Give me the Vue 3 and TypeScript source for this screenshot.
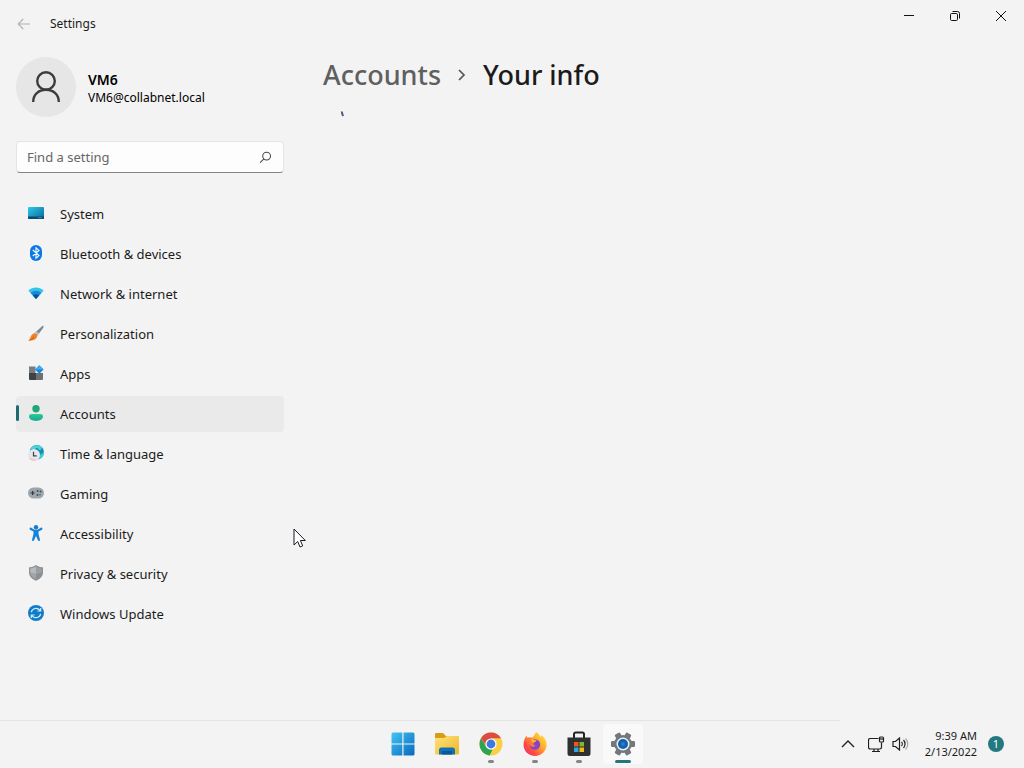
<script setup lang="ts">
import { ref } from 'vue'

interface NavItem {
  id: string
  label: string
}

const items: NavItem[] = [
  { id: 'system', label: 'System' },
  { id: 'bluetooth', label: 'Bluetooth & devices' },
  { id: 'network', label: 'Network & internet' },
  { id: 'personalization', label: 'Personalization' },
  { id: 'apps', label: 'Apps' },
  { id: 'accounts', label: 'Accounts' },
  { id: 'time', label: 'Time & language' },
  { id: 'gaming', label: 'Gaming' },
  { id: 'accessibility', label: 'Accessibility' },
  { id: 'privacy', label: 'Privacy & security' },
  { id: 'update', label: 'Windows Update' },
]

const current = ref('accounts')
const query = ref('')
</script>

<template>
  <div class="desktop">
    <header class="titlebar">
      <button class="back" aria-label="Back" disabled>
        <svg width="14" height="12" viewBox="0 0 14 12" fill="none" stroke="#b2b2b2" stroke-width="1.1">
          <path d="M13 6H1.200M6.200 1 1.200 6l5 5" />
        </svg>
      </button>
      <span class="app-name">Settings</span>
      <div class="window-buttons">
        <button aria-label="Minimize">
          <svg width="12" height="12" viewBox="0 0 12 12" stroke="#111" fill="none"><path d="M1 5.500h10" /></svg>
        </button>
        <button aria-label="Restore">
          <svg width="12" height="12" viewBox="0 0 12 12" stroke="#111" fill="none">
            <rect x="1.500" y="3.500" width="7" height="7" rx="1.200" />
            <path d="M3.500 1.500h5a2 2 0 0 1 2 2v5" />
          </svg>
        </button>
        <button aria-label="Close">
          <svg width="12" height="12" viewBox="0 0 12 12" stroke="#111" fill="none"><path d="m1 1 10 10M11 1 1 11" /></svg>
        </button>
      </div>
    </header>

    <div class="content">
      <aside class="sidebar">
        <button class="profile">
          <span class="avatar">
            <svg width="30" height="34" viewBox="0 0 30 34" fill="none" stroke="#3c3c3c" stroke-width="2.400">
              <circle cx="15" cy="11" r="8.800" />
              <path d="M2.200 32c0-7.600 5.300-12.200 12.800-12.200S27.800 24.400 27.800 32" />
            </svg>
          </span>
          <span class="identity">
            <strong>VM6</strong>
            <span>VM6@collabnet.local</span>
          </span>
        </button>

        <div class="search">
          <input v-model="query" type="text" placeholder="Find a setting" aria-label="Find a setting" />
          <svg width="13" height="13" viewBox="0 0 14 14" fill="none" stroke="#444" stroke-width="1.100">
            <circle cx="8.200" cy="5.500" r="4.200" />
            <path d="M5.200 8.500 1.200 12.500" />
          </svg>
        </div>

        <nav class="menu" aria-label="Settings">
          <a
            v-for="item in items"
            :key="item.id"
            :href="'#' + item.id"
            :class="{ active: current === item.id }"
            :aria-current="current === item.id ? 'page' : undefined"
            @click.prevent="current = item.id"
          >
            <svg class="icon" width="16" height="16" viewBox="0 0 16 16">
              <g v-if="item.id === 'system'">
                <defs>
                  <linearGradient id="sys" x1="0" y1="0" x2="1" y2="1"><stop stop-color="#2fc9e8" /><stop offset="1" stop-color="#09669a" /></linearGradient>
                </defs>
                <rect y="2" width="16" height="12" rx="1" fill="url(#sys)" />
                <path d="M0 11.500h16V13a1 1 0 0 1-1 1H1a1 1 0 0 1-1-1z" fill="#084a72" />
                <path d="M10.500 12.700h1M12.500 12.700h1" stroke="#a6dcf0" stroke-width="0.800" />
              </g>
              <g v-else-if="item.id === 'bluetooth'">
                <rect x="2" width="12" height="16" rx="6" fill="#0a78e6" />
                <path d="m4.800 5 6.200 5.500L8 13.300V2.700l3 2.800L4.800 11" fill="none" stroke="#fff" stroke-width="1.100" />
              </g>
              <g v-else-if="item.id === 'network'">
                <path d="M.4 5.800C4.800 1.500 11.200 1.500 15.600 5.800L8 14z" fill="#35c3ed" />
                <path d="M2.700 8C5.800 5.100 10.200 5.100 13.300 8L8 14z" fill="#168bd4" />
                <path d="M4.800 10.500c1.900-1.800 4.500-1.800 6.400 0L8 14z" fill="#09529b" />
              </g>
              <g v-else-if="item.id === 'personalization'">
                <path d="M14.800.4c1 .5.900 1.500.3 2.500L9.500 10.500 6.600 8z" fill="#7c8b96" />
                <path d="m8.300 6.200 2.700 2.300-1.800 2.400-3-2.500z" fill="#b9c5cb" />
                <path d="M6.400 8.200c2 .1 3.200 1.300 2.900 2.800-.6 3.500-4.800 5.300-9 4.500 2.200-1 2.100-6.800 6.100-7.300z" fill="#ee8527" />
                <path d="M.3 15.500c3-.6 4.200-2.500 6.200-4.700-.6 2.600-2.800 4.900-6.200 4.700z" fill="#bd5213" />
              </g>
              <g v-else-if="item.id === 'apps'">
                <path d="M1 1.500h6.500V8H1z" fill="#777d80" /><path d="M1 8h7v7H2a1 1 0 0 1-1-1z" fill="#3d4245" />
                <path d="M8 8h7v6a1 1 0 0 1-1 1H8z" fill="#6b7073" /><path d="m11.300.2 4.300 4.300-4.300 4.300L7 4.500z" fill="#1584df" />
                <path d="m11.300.2 4.300 4.300H7z" fill="#3eabf2" />
              </g>
              <g v-else-if="item.id === 'accounts'">
                <defs><linearGradient id="acc" x2="0" y2="1"><stop stop-color="#30c997" /><stop offset="1" stop-color="#13a894" /></linearGradient></defs>
                <circle cx="8" cy="3.700" r="3.700" fill="#20a779" />
                <path d="M3.700 9h8.600c1.500 0 2.700.9 2.700 2.300 0 2.800-3.200 4.700-7 4.700s-7-1.900-7-4.700C1 9.900 2.200 9 3.700 9z" fill="url(#acc)" />
              </g>
              <g v-else-if="item.id === 'time'">
                <circle cx="8.800" cy="7.200" r="7.200" fill="#158fb8" />
                <path d="M2.500 3.700C5-.4 11-1 14.300 2.500L12 5.500 9 2.800 5 5z" fill="#4ed3d8" />
                <path d="M10.500 11 16 7c.2 4-2.500 7.200-6 7.500z" fill="#43c9d2" />
                <circle cx="6" cy="9.900" r="6" fill="#e7e6e9" />
                <path d="M.8 12.500 9 15c-3 1.600-6.700.6-8.200-2.500z" fill="#f0c5c6" />
                <path d="M5.500 6.800v4h3.200" fill="none" stroke="#39454e" stroke-width="1.200" />
              </g>
              <g v-else-if="item.id === 'gaming'">
                <rect y="2.500" width="16" height="11" rx="5.500" fill="#9da6ac" />
                <path d="M2.500 8h4.200M4.600 5.900v4.200" stroke="#30383d" stroke-width="1.200" />
                <circle cx="9.600" cy="6" r="1" fill="#444e55" /><circle cx="12.600" cy="6.500" r="1" fill="#444e55" /><circle cx="9.500" cy="10" r="1" fill="#444e55" /><circle cx="12" cy="9.800" r="1" fill="#687e8d" />
              </g>
              <g v-else-if="item.id === 'accessibility'">
                <circle cx="8" cy="2.300" r="2.200" fill="#147bd1" />
                <path d="M2 2.800c-.8.700-.5 1.500.4 2.100L5.500 6.500V9L4 14.700c-.2 1.200 1.600 1.700 2.100.5L8 11l1.900 4.200c.5 1.200 2.300.7 2.100-.5L10.500 9V6.500l3.100-1.600c.9-.6 1.200-1.400.4-2.100-.7-.7-1.400-.2-2 .4-1 .9-2.200 1.500-4 1.500S5 4.100 4 3.200c-.6-.6-1.300-1.100-2-.4z" fill="#1783d8" />
              </g>
              <g v-else-if="item.id === 'privacy'">
                <path d="M8 0c2.200 1.600 4.300 2.300 7 2.300v4.900c0 4-2.700 6.600-7 8.600-4.300-2-7-4.600-7-8.600V2.300C3.700 2.300 5.800 1.600 8 0z" fill="#8b9094" />
                <path d="M8 1.500c1.800 1.200 3.700 1.800 5.800 1.900v4L8 9z" fill="#999fa3" /><path d="M8 1.500C6.200 2.700 4.300 3.300 2.200 3.400v4L8 9z" fill="#b6babd" />
                <path d="M2.200 7.200 8 9v5.300c-3.200-1.600-5.600-3.700-5.800-7.100z" fill="#a0a5a8" />
              </g>
              <g v-else>
                <circle cx="8" cy="8" r="8" fill="#127cc9" />
                <path d="M3.300 7.200C4.300 3.100 9.300 2.200 12 5.200M12.700 3v3H9.500M12.700 8.800c-1 4.100-6 5-8.700 2M3.300 13v-3h3.200" fill="none" stroke="#d5effb" stroke-width="1.200" />
              </g>
            </svg>
            <span>{{ item.label }}</span>
          </a>
        </nav>
      </aside>

      <main class="page">
        <h1>
          <a href="#accounts">Accounts</a>
          <svg width="10" height="14" viewBox="0 0 10 14" fill="none" stroke="#555" stroke-width="1.700"><path d="m2 2 5 5-5 5" /></svg>
          <span>Your info</span>
        </h1>
        <svg class="spinner" width="8" height="8" viewBox="0 0 8 8" role="img" aria-label="Loading">
          <path d="M2.800 1.500Q3 4 4.200 6" fill="none" stroke="#535678" stroke-width="2" />
        </svg>
      </main>
    </div>

    <svg class="pointer" width="14" height="21" viewBox="0 0 14 21" aria-hidden="true">
      <path d="M1 1v16l3.700-3.500L7 19l2.700-1.100-2.300-5.400h4.900z" fill="#fff" stroke="#171b24" />
    </svg>

    <footer class="taskbar">
      <div class="dock">
        <button aria-label="Start">
          <svg width="24" height="24" viewBox="0 0 24 24">
            <defs><linearGradient id="win" x2="1" y2="1"><stop stop-color="#43c5f4" /><stop offset="1" stop-color="#0768bd" /></linearGradient></defs>
            <path d="M2 .5h9.300v11H.5V2A1.500 1.500 0 0 1 2 .5zM12.500.5H22A1.500 1.500 0 0 1 23.500 2v9.500h-11zM.5 12.500h10.800v11H2A1.500 1.500 0 0 1 .5 22zM12.500 12.500h11V22a1.500 1.500 0 0 1-1.500 1.500h-9.500z" fill="url(#win)" />
          </svg>
        </button>
        <button aria-label="File Explorer">
          <svg width="26" height="24" viewBox="0 0 26 24">
            <defs><linearGradient id="folder" x2="1" y2="1"><stop stop-color="#ffe27a" /><stop offset="1" stop-color="#edb62a" /></linearGradient></defs>
            <path d="M2 1h7l3 3h9v5H1V2a1 1 0 0 1 1-1z" fill="#d99c18" />
            <path d="M1 6h9l3-2h11a1 1 0 0 1 1 1v16a1.500 1.500 0 0 1-1.500 1.500h-21A1.500 1.500 0 0 1 1 21z" fill="url(#folder)" />
            <path d="M5 22.500V18a2.500 2.500 0 0 1 2.500-2.500h11A2.500 2.500 0 0 1 21 18v4.500z" fill="#1270b8" /><path d="M8 19h10v3.500H8z" fill="#0b5798" />
          </svg>
        </button>
        <button class="open" aria-label="Chrome">
          <svg width="24" height="24" viewBox="0 0 24 24">
            <circle cx="12" cy="12" r="11.500" fill="#f8cf45" />
            <path d="M2 6.300A11.500 11.500 0 0 1 22 6.300H12L8 15z" fill="#db4d40" />
            <path d="M2 6.300 7.300 15c1.200 2 3.600 3 6.400 2.200l-3.100 6.200A11.500 11.500 0 0 1 2 6.300z" fill="#2da454" />
            <circle cx="12" cy="12" r="5.600" fill="#fff" /><circle cx="12" cy="12" r="4.400" fill="#3e78e0" />
          </svg>
        </button>
        <button class="open" aria-label="Firefox">
          <svg width="24" height="24" viewBox="0 0 24 24">
            <defs>
              <linearGradient id="fox" x1="1" y1="0" x2="0" y2="1"><stop stop-color="#fff04a" /><stop offset=".4" stop-color="#ffad2b" /><stop offset=".7" stop-color="#ff4c42" /><stop offset="1" stop-color="#e82781" /></linearGradient>
            </defs>
            <path d="M3.500 3.500c.2 1.200.6 1.800 1.200 2.300L9 5.500c1.500-.1 2.500-2.700 4-5.500 2.300 1.100 3.800 3.100 4.300 4.700.8-.1 1.300-.8 1.300-1.700 3.300 2.700 5.100 6.100 5 9.800-.1 6.300-5.100 11.100-11.600 11.100S.5 18.900.5 12.700c0-3.700 1.300-6.600 3-9.200z" fill="url(#fox)" />
            <circle cx="12" cy="12.500" r="5.200" fill="#8446c5" />
            <path d="M3.700 6.300c2.600-1.500 5.300-.3 6.500 1.300l3.500 1c-.6 1.500-2.400 1.300-3.100 2.700-.6 1.300.7 2.500 2.300 2.200-1.700 2-4.800 1.800-5.900-.4C5.800 10.700 6.100 8 8 7z" fill="#ff783b" />
            <path d="M8 7.200c1-.3 1.800.1 2.300.5l3 .8c-.5 1.100-2 1.300-2.800 2.200-1.200-.7-2.300-1.800-2.500-3.500z" fill="#ffb62e" />
          </svg>
        </button>
        <button class="open" aria-label="Microsoft Store">
          <svg width="24" height="26" viewBox="0 0 24 26">
            <path d="M7 8V3.200A1.700 1.700 0 0 1 8.700 1.500h6.600A1.700 1.700 0 0 1 17 3.200V8" fill="none" stroke="#242424" stroke-width="2" />
            <path d="M.5 6.500h23v16a2.500 2.500 0 0 1-2.500 2.500H3A2.500 2.500 0 0 1 .5 22.500z" fill="#2f3030" />
            <path d="M7 11h4.500v4.500H7z" fill="#f1512b" /><path d="M12.500 11H17v4.500h-4.500z" fill="#7db928" /><path d="M7 16.500h4.500V21H7z" fill="#27a9e6" /><path d="M12.500 16.500H17V21h-4.500z" fill="#f8b719" />
          </svg>
        </button>
        <button class="focused" aria-label="Settings">
          <svg width="26" height="26" viewBox="0 0 26 26">
            <g fill="#73787c">
              <circle cx="13" cy="13" r="9" />
              <rect v-for="n in 6" :key="n" x="10" y="1" width="6" height="6" rx="1.200" :transform="`rotate(${n * 60 - 30} 13 13)`" />
            </g>
            <circle cx="13" cy="13" r="6.500" fill="#e9f3fa" /><circle cx="13" cy="13" r="5" fill="#155fae" /><circle cx="13" cy="13" r="2" fill="#217fcc" />
          </svg>
        </button>
      </div>

      <div class="tray">
        <button class="chevron" aria-label="Show hidden icons">
          <svg width="14" height="8" viewBox="0 0 14 8" fill="none" stroke="#222" stroke-width="1.400"><path d="m1 7 6-6 6 6" /></svg>
        </button>
        <button class="status" aria-label="Network and volume">
          <svg width="17" height="17" viewBox="0 0 17 17" fill="none" stroke="#1f1f1f" stroke-width="1.200">
            <path d="M10.500 2.500H2.200A1.700 1.700 0 0 0 .5 4.200v7A1.700 1.700 0 0 0 2.200 13h9.600a1.700 1.700 0 0 0 1.700-1.700V6.500M4 15.500h8M6 13v2.500M10 13v2.500" />
            <rect x="11.500" y="1" width="4" height="5" rx="1" /><path d="M12 3h3" />
          </svg>
          <svg width="17" height="14" viewBox="0 0 17 14" fill="none" stroke="#1f1f1f" stroke-width="1.200">
            <path d="M1 4.500h2.500L7.500 1v12L3.500 9.500H1zM9.500 5c1 1 1 3 0 4M11.500 3c2 2.200 2 5.800 0 8" /><path d="M13.500 1.500c3 3 3 8 0 11" stroke="#aaa" />
          </svg>
        </button>
        <button class="clock"><time datetime="2022-02-13T09:39">9:39 AM<br />2/13/2022</time></button>
        <button class="badge" aria-label="1 notification">1</button>
      </div>
    </footer>
  </div>
</template>

<style>
html,
body {
  margin: 0;
  background: #f3f3f3;
}
</style>

<style scoped>
.desktop {
  position: relative;
  display: flex;
  flex-direction: column;
  min-height: 100vh;
  background: #f3f3f3;
  color: #1b1b1b;
  font-family: "Noto Sans", "Open Sans", sans-serif;
  font-size: 13px;
}
button {
  margin: 0;
  padding: 0;
  border: 0;
  background: none;
  color: inherit;
  font: inherit;
}
a {
  color: inherit;
  text-decoration: none;
}
svg {
  display: block;
  flex: none;
}
.titlebar {
  display: flex;
  align-items: center;
  height: 48px;
  padding-left: 17px;
}
.app-name {
  margin-left: 19px;
  font-size: 12px;
  line-height: 18px;
}
.window-buttons {
  display: flex;
  align-self: flex-start;
  margin-left: auto;
}
.window-buttons button {
  display: grid;
  place-items: center;
  width: 46px;
  height: 32px;
}
.content {
  display: flex;
  flex: 1;
}
.sidebar {
  flex: none;
  box-sizing: border-box;
  width: 300px;
  padding: 9px 16px 0;
}
.profile {
  display: flex;
  align-items: center;
  gap: 12px;
  text-align: left;
}
.avatar {
  display: grid;
  place-items: center;
  width: 60px;
  height: 60px;
  border-radius: 50%;
  background: #e6e6e6;
}
.identity {
  display: flex;
  flex-direction: column;
  padding-top: 4px;
  color: #000;
  font-size: 12px;
  line-height: 18px;
}
.identity strong {
  font-size: 14px;
  font-weight: 600;
}
.search {
  display: flex;
  align-items: center;
  box-sizing: border-box;
  height: 32px;
  margin-top: 24px;
  padding: 0 11px 0 10px;
  border: 1px solid #e4e4e4;
  border-bottom-color: #858585;
  border-radius: 4px;
  background: #fdfdfd;
}
.search input {
  flex: 1;
  min-width: 0;
  padding: 0;
  border: 0;
  outline: 0;
  background: none;
  font: inherit;
}
.search input::placeholder {
  color: #666;
  opacity: 1;
}
.menu {
  display: flex;
  flex-direction: column;
  gap: 4px;
  margin-top: 23px;
}
.menu a {
  position: relative;
  display: flex;
  align-items: center;
  gap: 16px;
  height: 36px;
  padding-left: 12px;
  border-radius: 4px;
}
.menu .icon {
  margin-bottom: 2px;
}
.menu .active {
  background: #eaeaea;
}
.menu .active::before {
  position: absolute;
  top: 9px;
  left: 0;
  width: 3px;
  height: 16px;
  border-radius: 2px;
  background: #1b6b70;
  content: "";
}
.page {
  flex: 1;
  padding: 9px 23px;
}
h1 {
  display: flex;
  align-items: center;
  margin: 0;
  font-size: 27px;
  font-weight: 500;
  line-height: 36px;
}
h1 a {
  color: #5f5f5f;
}
h1 svg {
  margin: 0 16px;
}
.spinner {
  margin: 17px 0 0 16px;
}
.pointer {
  position: absolute;
  top: 528px;
  left: 293px;
}
.taskbar {
  display: grid;
  grid-template-columns: 1fr auto 1fr;
  height: 48px;
  background: linear-gradient(90deg, #e4e4e4 82%, #f3f3f3 82%) top / 100% 1px no-repeat;
}
.dock {
  display: flex;
  grid-column: 2;
  align-items: center;
  gap: 4px;
  margin-left: 1px;
}
.dock button {
  position: relative;
  display: grid;
  place-items: center;
  width: 40px;
  height: 40px;
  border-radius: 4px;
}
.dock .open::after,
.dock .focused::after {
  position: absolute;
  bottom: 1px;
  left: 17px;
  width: 6px;
  height: 3px;
  border-radius: 2px;
  background: #858585;
  content: "";
}
.dock .focused {
  background: #f9f9f9;
}
.dock .focused::after {
  left: 12px;
  width: 16px;
  background: #22777e;
}
.tray {
  display: flex;
  align-items: center;
  justify-content: flex-end;
  padding-right: 20px;
}
.status {
  display: flex;
  align-items: center;
  gap: 7px;
  margin-left: 13px;
}
.clock {
  margin-left: 16px;
  font-size: 11px;
  line-height: 16px;
  text-align: right;
}
.badge {
  width: 16px;
  height: 16px;
  margin-left: 11px;
  border-radius: 50%;
  background: #22797f;
  color: #fff;
  font-size: 11px;
  line-height: 16px;
}
</style>
